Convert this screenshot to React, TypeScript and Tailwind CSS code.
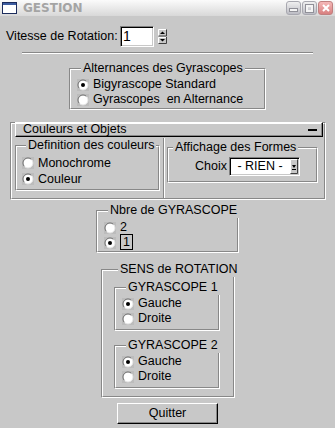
import type { ReactNode } from "react";

const Radio = ({ checked = false }: { checked?: boolean }) => (
  <svg width="12" height="12" viewBox="0 0 12 12" className="shrink-0">
    <rect width="12" height="12" fill="#bcbcbc" />
    <circle cx="6" cy="6" r="5" fill="white" />
    <path d="M2.46 9.54 A5 5 0 0 1 9.54 2.46" stroke="#6a6a6a" strokeWidth="1" fill="none" />
    <path d="M9.54 2.46 A5 5 0 0 1 2.46 9.54" stroke="#e4e4e4" strokeWidth="1" fill="none" />
    {checked && <circle cx="6" cy="6" r="2" fill="black" />}
  </svg>
);

function RadioRow({ label, checked, h = "h-[15px]" }: { label: ReactNode; checked?: boolean; h?: string }) {
  return (
    <div className={`flex items-center gap-[4px] ${h}`}>
      <Radio checked={checked} />
      <span className="leading-[15px] whitespace-pre">{label}</span>
    </div>
  );
}

function Group({
  title,
  className = "",
  bodyClass = "",
  children,
}: {
  title: string;
  className?: string;
  bodyClass?: string;
  children: ReactNode;
}) {
  return (
    <div className={`border border-t-[#888] border-l-[#888] border-r-white border-b-white ${className}`}>
      <div className={`h-full border border-t-white border-l-white border-r-[#888] border-b-[#888] ${bodyClass}`}>
        <div className="-mt-[9px] ml-[4px] w-fit bg-[#c8c8c8] px-[2px] leading-[15px] whitespace-nowrap">{title}</div>
        {children}
      </div>
    </div>
  );
}

export default function App() {
  return (
    <div className="w-[335px] h-[428px] overflow-hidden bg-[#c8c8c8] text-[12.5px] text-black font-['Liberation_Sans',Arial,sans-serif]">
      {/* title bar */}
      <div className="flex h-4 items-center bg-linear-to-b from-[#fbfbfb] to-[#d8d8d8]">
        <svg width="15" height="12" viewBox="0 0 15 12" className="ml-[2px]">
          <rect x="0.5" y="0.5" width="14" height="11" fill="white" stroke="#1c2c5c" />
          <rect x="1" y="1" width="13" height="2" fill="#3c5ca0" />
        </svg>
        <span className="ml-[6px] font-['DejaVu_Sans',sans-serif] text-[12px] font-bold leading-none text-[#a4a4a4]">GESTION</span>
        <div className="ml-auto mr-[2px] flex gap-px">
          <div className="flex h-[14px] w-[15px] items-end justify-center rounded-[3px] border border-[#a8a8b0] bg-linear-to-b from-[#f0f0f0] to-[#bcbcc4] pb-[3px]">
            <div className="h-[2px] w-[7px] bg-[#f4f4f4] shadow-[0_0_0_1px_#909098]" />
          </div>
          <div className="flex h-[14px] w-[15px] items-center justify-center rounded-[3px] border border-[#a8a8b0] bg-linear-to-b from-[#f0f0f0] to-[#bcbcc4]">
            <div className="h-[7px] w-[7px] border-2 border-[#f4f4f4] shadow-[0_0_0_1px_#909098]" />
          </div>
          <div className="flex h-[14px] w-[15px] items-center justify-center rounded-[3px] border border-[#c08080] bg-linear-to-b from-[#f4b8b8] to-[#d88080]">
            <svg width="8" height="8" viewBox="0 0 8 8">
              <path d="M1 1 L7 7 M7 1 L1 7" stroke="white" strokeWidth="2" />
            </svg>
          </div>
        </div>
      </div>

      {/* vitesse */}
      <div className="mt-[10px] flex h-[21px] items-center pl-[6px]">
        <span className="w-[114px] whitespace-nowrap leading-[15px]">Vitesse de Rotation:</span>
        <div className="flex h-[21px] w-[34px] items-center border border-t-[#808080] border-l-[#808080] border-r-white border-b-white bg-white pl-[2px] text-[14px] shadow-[inset_1px_1px_0_#000,inset_-1px_-1px_0_#c8c8c8]">
          1
        </div>
        <svg width="9" height="15" viewBox="0 0 9 15" className="ml-[4px]">
          <rect width="9" height="15" fill="#c8c8c8" />
          <path d="M0.5 7 V0.5 H8" stroke="white" fill="none" />
          <path d="M0.5 7 H8.5 V0.5" stroke="#404040" fill="none" />
          <path d="M0.5 14.5 V8.5 H8" stroke="white" fill="none" />
          <path d="M0.5 14.5 H8.5 V8" stroke="#404040" fill="none" />
          <path d="M2 5 L4.5 2.5 L7 5 Z" fill="black" />
          <path d="M2 10 L4.5 12.5 L7 10 Z" fill="black" />
        </svg>
      </div>

      {/* separator */}
      <div className="ml-[22px] mt-[5px] h-[2px] w-[291px] border-t border-t-[#888] border-b border-b-white" />

      <Group title="Alternances des Gyrascopes" className="mx-auto mt-[14px] h-[42px] w-[197px]" bodyClass="pl-[6px]">
        <div className="mt-[1px]">
          <RadioRow label="Bigyrascope Standard" checked />
          <RadioRow label="Gyrascopes  en Alternance" />
        </div>
      </Group>

      {/* Couleurs et Objets */}
      <div className="ml-[10px] mt-[12px] h-[78px] w-[316px] border border-t-[#888] border-l-[#888] border-r-white border-b-white">
        <div className="h-full border border-t-white border-l-white border-r-[#888] border-b-[#888]">
          <div className="-mt-[2px] ml-[3px] mr-px flex h-[15px] items-center justify-between border border-t-white border-l-white border-r-black border-b-black pl-[7px] pr-[5px] shadow-[inset_-1px_-1px_0_#888]">
            <span className="leading-[13px]">Couleurs et Objets</span>
            <div className="h-[2px] w-[9px] bg-black" />
          </div>
          <div className="flex h-[61px] items-start">
            <Group title="Definition des couleurs" className="ml-[3px] mt-[8px] h-[46px] w-[145px]" bodyClass="pl-[5px]">
              <div className="mt-[2px]">
                <RadioRow label="Monochrome" h="h-[16px]" />
                <RadioRow label="Couleur" checked h="h-[16px]" />
              </div>
            </Group>
            <div className="ml-[3px] mt-px h-[60px] w-[2px] border-l border-l-[#888] border-r border-r-white" />
            <Group title="Affichage des Formes" className="ml-[2px] mt-[10px] h-[36px] w-[151px]">
              <div className="mt-[2px] flex items-center justify-end gap-[2px] pr-[16px]">
                <span className="leading-[15px]">Choix</span>
                <div className="flex h-[19px] w-[71px] border border-t-[#808080] border-l-[#808080] border-r-white border-b-white bg-white shadow-[inset_1px_1px_0_#000,inset_-1px_-1px_0_#c8c8c8]">
                  <span className="flex flex-1 items-center justify-center whitespace-pre leading-[15px]">- RIEN -</span>
                  <svg width="8" height="15" viewBox="0 0 8 15" className="mr-px mt-px">
                    <rect width="8" height="15" fill="#c8c8c8" />
                    <path d="M0.5 14.5 V0.5 H7.5" stroke="white" fill="none" />
                    <path d="M0.5 14.5 H7.5 V0.5" stroke="#404040" fill="none" />
                    <path d="M2 6 L4 9 L6 6 Z" fill="black" />
                    <rect x="2" y="10" width="4" height="1" fill="black" />
                  </svg>
                </div>
              </div>
            </Group>
          </div>
        </div>
      </div>

      <Group title="Nbre de GYRASCOPE" className="mx-auto mt-[10px] h-[43px] w-[143px]" bodyClass="pl-[6px]">
        <div className="mt-[2px]">
          <RadioRow label="2" />
          <RadioRow label={<span className="border border-black px-[2px] leading-[12px]">1</span>} checked />
        </div>
      </Group>

      <Group title="SENS de ROTATION" className="ml-[101px] mt-[16px] h-[129px] w-[134px]" bodyClass="pl-[11px]">
        <Group title="GYRASCOPE 1" className="mt-[10px] h-[44px] w-[106px]" bodyClass="pl-[6px]">
          <div className="mt-[1px]">
            <RadioRow label="Gauche" checked />
            <RadioRow label="Droite" />
          </div>
        </Group>
        <Group title="GYRASCOPE 2" className="mt-[14px] h-[44px] w-[106px]" bodyClass="pl-[6px]">
          <div className="mt-[1px]">
            <RadioRow label="Gauche" checked />
            <RadioRow label="Droite" />
          </div>
        </Group>
      </Group>

      <button className="mx-auto mt-[5px] flex h-[21px] w-[101px] items-center justify-center border border-t-white border-l-white border-r-black border-b-black leading-[15px] shadow-[inset_-1px_-1px_0_#888]">
        Quitter
      </button>
    </div>
  );
}
